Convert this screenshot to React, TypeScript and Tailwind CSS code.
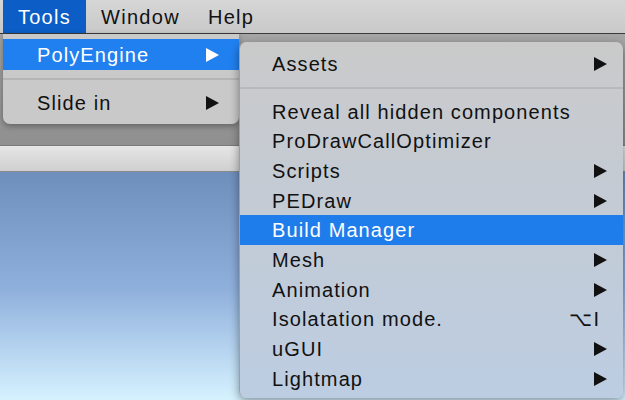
import React from "react";

const font = { fontFamily: '"Liberation Sans", Arial, sans-serif' };

function Arrow({ white = false }: { white?: boolean }) {
  return (
    <svg width="13" height="14" viewBox="0 0 13 14" className="shrink-0">
      <path d="M0 0 L13 7 L0 14 Z" fill={white ? "#ffffff" : "#111111"} />
    </svg>
  );
}

type Item =
  | { kind: "sep" }
  | { kind: "item"; label: string; sub?: boolean; active?: boolean; shortcut?: string };

const subItems: Item[] = [
  { kind: "item", label: "Assets", sub: true },
  { kind: "sep" },
  { kind: "item", label: "Reveal all hidden components" },
  { kind: "item", label: "ProDrawCallOptimizer" },
  { kind: "item", label: "Scripts", sub: true },
  { kind: "item", label: "PEDraw", sub: true },
  { kind: "item", label: "Build Manager", active: true },
  { kind: "item", label: "Mesh", sub: true },
  { kind: "item", label: "Animation", sub: true },
  { kind: "item", label: "Isolatation mode.", shortcut: "⌥I" },
  { kind: "item", label: "uGUI", sub: true },
  { kind: "item", label: "Lightmap", sub: true },
];

export default function App() {
  return (
    <div className="relative w-[625px] h-[400px] overflow-hidden" style={font}>
      {/* background window */}
      <div className="flex flex-col h-full">
        <div className="h-[33px] flex items-stretch bg-gradient-to-b from-[#d6d6d6] to-[#c9c9c9] text-[20px] tracking-[1.3px] text-[#111] shrink-0">
          <div className="ml-[3px] w-[83px] bg-[#0c5dc5] text-white flex items-center justify-center">
            Tools
          </div>
          <div className="ml-[15px] flex items-center">Window</div>
          <div className="ml-[28px] flex items-center">Help</div>
        </div>
        <div className="h-px bg-[#3a3a3a] shrink-0" />
        <div className="h-[111px] bg-gradient-to-b from-[#a6a6a6] to-[#8f8f8f] shrink-0" />
        <div className="h-px bg-[#7a7a7a] shrink-0" />
        <div className="h-[25px] bg-gradient-to-b from-[#e6e6e6] to-[#cfcfcf] shrink-0" />
        <div className="h-px bg-[#8a8a8a] shrink-0" />
        <div className="flex-1 bg-gradient-to-b from-[#6e8ebb] via-[#8eaedb] to-[#d6f2ff]" />
      </div>

      {/* Tools menu */}
      <div className="absolute left-[3px] top-[34px] w-[236px] rounded-b-[7px] bg-[#c9c9c9] shadow-[0_2px_6px_rgba(0,0,0,0.35)] pt-[5px] pb-[6px] text-[20px] tracking-[1.1px] text-[#111]">
        <div className="h-[31px] bg-[#2180ef] text-white flex items-center pl-[34px] pr-[20px]">
          <span className="flex-1">PolyEngine</span>
          <Arrow white />
        </div>
        <div className="h-[18px] flex items-center">
          <div className="h-[2px] w-full bg-[#b5b5b5]" />
        </div>
        <div className="h-[30px] flex items-center pl-[34px] pr-[20px]">
          <span className="flex-1">Slide in</span>
          <Arrow />
        </div>
      </div>

      {/* PolyEngine submenu */}
      <div className="absolute left-[239px] top-[42px] w-[384px] h-[356px] rounded-[7px] bg-gradient-to-b from-[#cacaca] via-[#c3cbd6] to-[#bccde2] shadow-[0_3px_10px_rgba(0,0,0,0.4)] border-l border-[#9aa0a8] pt-[7px] text-[20px] tracking-[1.1px] text-[#111]">
        {subItems.map((it, i) =>
          it.kind === "sep" ? (
            <div key={i} className="h-[18px] flex items-center">
              <div className="h-[2px] w-full bg-[#b7b9bc]" />
            </div>
          ) : (
            <div
              key={i}
              className={
                "h-[29.7px] flex items-center pl-[32px] pr-[16px] " +
                (it.active ? "bg-[#1f7ceb] text-white" : "")
              }
            >
              <span className="flex-1">{it.label}</span>
              {it.sub && <Arrow />}
              {it.shortcut && <span className="pr-[7px] tracking-[1px]">{it.shortcut}</span>}
            </div>
          )
        )}
      </div>
    </div>
  );
}
